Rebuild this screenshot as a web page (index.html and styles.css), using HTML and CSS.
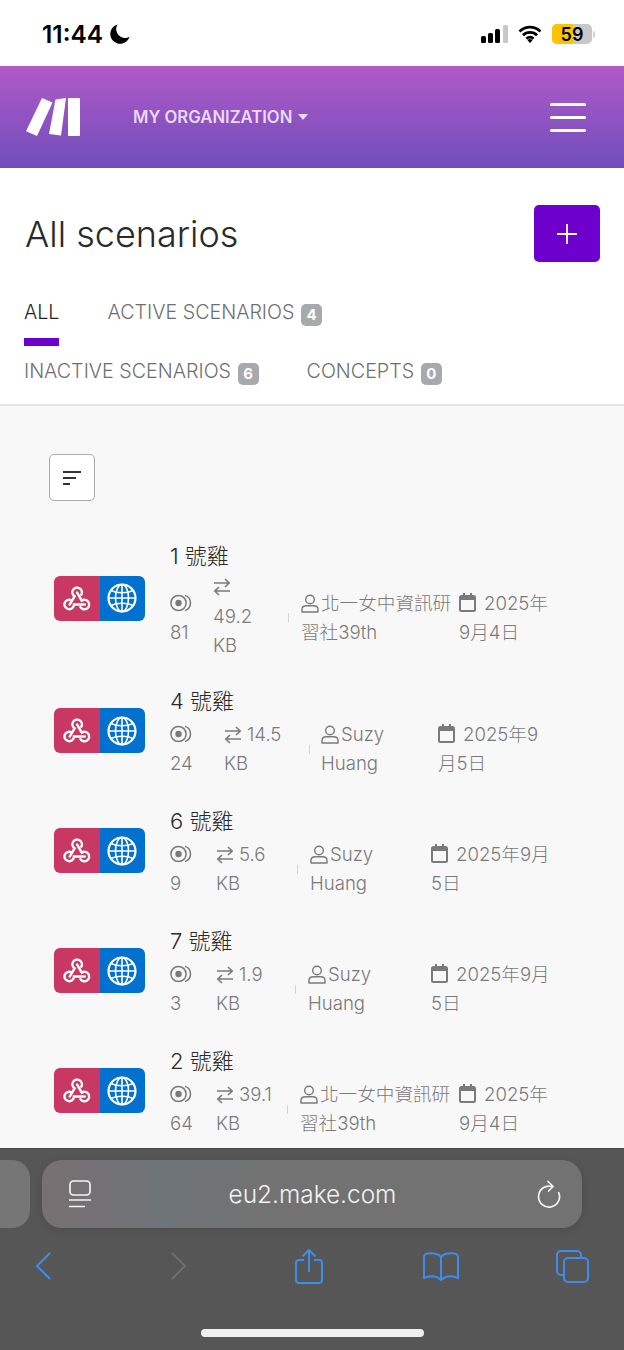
FILE: index.html
```html
<!DOCTYPE html>
<html lang="en">
<head>
    <meta charset="UTF-8">
    <title>All scenarios</title>
    <link rel="stylesheet" href="styles.css">
</head>
<body>

<svg class="defs" width="0" height="0">
    <symbol id="i-eye" viewBox="0 0 24 18">
        <circle cx="8.500" cy="9" r="7.600" fill="none" stroke="currentColor" stroke-width="1.500"/>
        <circle cx="8.500" cy="9" r="3.200" fill="currentColor"/>
        <path d="M15 1.400a8 8 0 0 1 0 15.200" fill="none" stroke="currentColor" stroke-width="1.500"/>
    </symbol>
    <symbol id="i-swap" viewBox="0 0 18 18">
        <path d="M1 5h15M12 1l4.200 4-4.200 4M17 13H2M6 9l-4.200 4 4.200 4" fill="none" stroke="currentColor" stroke-width="1.600"/>
    </symbol>
    <symbol id="i-user" viewBox="0 0 18 19">
        <circle cx="9" cy="5.500" r="4.300" fill="none" stroke="currentColor" stroke-width="1.400"/>
        <path d="M1 18v-2.500c0-2.500 2-3.700 4.500-3.700h7c2.500 0 4.500 1.200 4.500 3.700V18z" fill="none" stroke="currentColor" stroke-width="1.400" stroke-linejoin="round"/>
    </symbol>
    <symbol id="i-cal" viewBox="0 0 17 19">
        <path d="M4 0h2v3H4zM11 0h2v3h-2z" fill="currentColor"/>
        <path d="M2.500 2h12A2.500 2.500 0 0 1 17 4.500v12a2.500 2.500 0 0 1-2.500 2.500h-12A2.500 2.500 0 0 1 0 16.500v-12A2.500 2.500 0 0 1 2.500 2zM2 7v9.500a.5.500 0 0 0 .5.500h12a.5.500 0 0 0 .5-.5V7z" fill="currentColor" fill-rule="evenodd"/>
    </symbol>
    <symbol id="i-hook" viewBox="0 0 32 29">
        <g fill="none" stroke="#fff" stroke-width="2.800" stroke-linecap="round">
            <path d="M7.500 21.500L13.200 12A5.500 5.500 0 1 1 21 10"/>
            <path d="M16 7.500L21.500 17A5.500 5.500 0 1 1 20 24.500"/>
            <path d="M25 21.500H12.500A5.500 5.500 0 1 1 9.500 16.500"/>
        </g>
    </symbol>
    <symbol id="i-globe" viewBox="0 0 30 30">
        <g fill="none" stroke="#fff" stroke-width="1.600">
            <circle cx="15" cy="15" r="13.500" stroke-width="2.200"/>
            <ellipse cx="15" cy="15" rx="6.500" ry="13.500"/>
            <path d="M15 1.500v27M1.500 15h27"/>
            <path d="M4 7.500c6 3 16 3 22 0M4 22.500c6-3 16-3 22 0"/>
        </g>
    </symbol>
</svg>

<div class="status">
    <div class="clock">
        <span>11:44</span>
        <svg width="20" height="20" viewBox="0 0 20 20"><path d="M7.500 0.500a9.800 9.800 0 1 0 12 12.200A8.800 8.800 0 0 1 7.500 0.500z" fill="#000"/></svg>
    </div>
    <div class="status-right">
        <svg width="27" height="18" viewBox="0 0 27 18">
            <rect x="0" y="11" width="5" height="7" rx="1.500" fill="#000"/>
            <rect x="7" y="8" width="5" height="10" rx="1.500" fill="#000"/>
            <rect x="14" y="4" width="5" height="14" rx="1.500" fill="#000"/>
            <rect x="22" y="0" width="5" height="18" rx="1.500" fill="#c8c8c8"/>
        </svg>
        <svg width="24" height="18" viewBox="0 0 24 18">
            <path d="M1.500 6.500a15 15 0 0 1 21 0M5 10.200a10 10 0 0 1 14 0M8.500 13.700a5 5 0 0 1 7 0" fill="none" stroke="#000" stroke-width="2.800"/>
            <path d="M9.500 15.200L12 18l2.500-2.800a3.500 3.500 0 0 0-5 0z" fill="#000"/>
        </svg>
        <div class="battery"><span class="battery-fill"></span><span class="battery-num">59</span></div>
        <span class="battery-nub"></span>
    </div>
</div>

<header class="topbar">
    <svg class="logo" width="54" height="38" viewBox="0 0 54 38">
        <path d="M16 0l10.500 4.500L11 38 0 33.200z" fill="#fff"/>
        <path d="M29.500 1.500L40 0l-5 37.500-12-1.500z" fill="#fff"/>
        <rect x="42" y="0" width="12" height="38" rx="1" fill="#fff"/>
    </svg>
    <div class="org">MY ORGANIZATION <span class="caret"></span></div>
    <div class="burger"><span></span><span></span><span></span></div>
</header>

<section class="hero">
    <div class="hero-head">
        <h1>All scenarios</h1>
        <button class="add-btn">
            <svg width="22" height="22" viewBox="0 0 22 22"><path d="M11 1v20M1 11h20" stroke="#fff" stroke-width="1.800"/></svg>
        </button>
    </div>
    <nav class="tabs">
        <a class="tab tab-on">ALL</a>
        <a class="tab">ACTIVE SCENARIOS <span class="badge">4</span></a>
        <a class="tab">INACTIVE SCENARIOS <span class="badge">6</span></a>
        <a class="tab">CONCEPTS <span class="badge">0</span></a>
    </nav>
</section>

<main class="list">
    <button class="sort-btn">
        <svg width="20" height="16" viewBox="0 0 20 16"><path d="M1 2h18M1 8h13M1 14h7" stroke="#333" stroke-width="1.800"/></svg>
    </button>

    <div class="row">
        <div class="apps"><span class="app app-red"><svg width="28" height="25"><use href="#i-hook"/></svg></span><span class="app app-blue"><svg width="30" height="30"><use href="#i-globe"/></svg></span></div>
        <div class="info">
            <div class="name">1 號雞</div>
            <div class="meta meta-1">
                <div class="views"><svg class="ico-eye"><use href="#i-eye"/></svg>81</div>
                <div class="size size-stack"><svg class="ico-swap"><use href="#i-swap"/></svg>49.2 KB</div>
                <div class="sep"></div>
                <div class="owner"><svg class="ico-user"><use href="#i-user"/></svg>北一女中資訊研習社39th</div>
                <div class="date"><svg class="ico-cal"><use href="#i-cal"/></svg>2025年9月4日</div>
            </div>
        </div>
    </div>

    <div class="row">
        <div class="apps"><span class="app app-red"><svg width="28" height="25"><use href="#i-hook"/></svg></span><span class="app app-blue"><svg width="30" height="30"><use href="#i-globe"/></svg></span></div>
        <div class="info">
            <div class="name">4 號雞</div>
            <div class="meta meta-2">
                <div class="views"><svg class="ico-eye"><use href="#i-eye"/></svg>24</div>
                <div class="size"><svg class="ico-swap"><use href="#i-swap"/></svg>14.5 KB</div>
                <div class="sep"></div>
                <div class="owner"><svg class="ico-user"><use href="#i-user"/></svg>Suzy Huang</div>
                <div class="date"><svg class="ico-cal"><use href="#i-cal"/></svg>2025年9月5日</div>
            </div>
        </div>
    </div>

    <div class="row">
        <div class="apps"><span class="app app-red"><svg width="28" height="25"><use href="#i-hook"/></svg></span><span class="app app-blue"><svg width="30" height="30"><use href="#i-globe"/></svg></span></div>
        <div class="info">
            <div class="name">6 號雞</div>
            <div class="meta meta-3">
                <div class="views"><svg class="ico-eye"><use href="#i-eye"/></svg>9</div>
                <div class="size"><svg class="ico-swap"><use href="#i-swap"/></svg>5.6 KB</div>
                <div class="sep"></div>
                <div class="owner"><svg class="ico-user"><use href="#i-user"/></svg>Suzy Huang</div>
                <div class="date"><svg class="ico-cal"><use href="#i-cal"/></svg>2025年9月5日</div>
            </div>
        </div>
    </div>

    <div class="row">
        <div class="apps"><span class="app app-red"><svg width="28" height="25"><use href="#i-hook"/></svg></span><span class="app app-blue"><svg width="30" height="30"><use href="#i-globe"/></svg></span></div>
        <div class="info">
            <div class="name">7 號雞</div>
            <div class="meta meta-4">
                <div class="views"><svg class="ico-eye"><use href="#i-eye"/></svg>3</div>
                <div class="size"><svg class="ico-swap"><use href="#i-swap"/></svg>1.9 KB</div>
                <div class="sep"></div>
                <div class="owner"><svg class="ico-user"><use href="#i-user"/></svg>Suzy Huang</div>
                <div class="date"><svg class="ico-cal"><use href="#i-cal"/></svg>2025年9月5日</div>
            </div>
        </div>
    </div>

    <div class="row">
        <div class="apps"><span class="app app-red"><svg width="28" height="25"><use href="#i-hook"/></svg></span><span class="app app-blue"><svg width="30" height="30"><use href="#i-globe"/></svg></span></div>
        <div class="info">
            <div class="name">2 號雞</div>
            <div class="meta meta-5">
                <div class="views"><svg class="ico-eye"><use href="#i-eye"/></svg>64</div>
                <div class="size"><svg class="ico-swap"><use href="#i-swap"/></svg>39.1 KB</div>
                <div class="sep"></div>
                <div class="owner"><svg class="ico-user"><use href="#i-user"/></svg>北一女中資訊研習社39th</div>
                <div class="date"><svg class="ico-cal"><use href="#i-cal"/></svg>2025年9月4日</div>
            </div>
        </div>
    </div>
</main>

<footer class="safari">
    <div class="url-row">
        <div class="prev-tab"></div>
        <div class="url-bar">
            <svg width="24" height="28" viewBox="0 0 24 28" fill="none" stroke="#f4f4f4" stroke-width="1.700">
                <rect x="2" y="1" width="20" height="14" rx="3.500"/>
                <path d="M1 20h22M1 26.500h16"/>
            </svg>
            <span class="url-text">eu2.make.com</span>
            <svg width="24" height="28" viewBox="0 0 24 28" fill="none" stroke="#f4f4f4" stroke-width="1.700">
                <path d="M15 6.500A10.500 10.500 0 1 0 21.500 12"/>
                <path d="M10.500 1l5.500 5.500L11 11.500"/>
            </svg>
        </div>
    </div>
    <div class="tools">
        <svg class="tool-back" width="16" height="28" viewBox="0 0 16 28"><path d="M15 1L2 14l13 13" fill="none" stroke="#3e8ded" stroke-width="2"/></svg>
        <svg class="tool-fwd" width="16" height="28" viewBox="0 0 16 28"><path d="M1 1l13 13L1 27" fill="none" stroke="#6e6e6e" stroke-width="2"/></svg>
        <svg class="tool-share" width="28" height="35" viewBox="0 0 28 35" fill="none" stroke="#3e8ded" stroke-width="2">
            <path d="M9 11H4a3 3 0 0 0-3 3v17a3 3 0 0 0 3 3h20a3 3 0 0 0 3-3V14a3 3 0 0 0-3-3h-5"/>
            <path d="M14 23V1M7.500 7.500L14 1l6.500 6.500"/>
        </svg>
        <svg class="tool-book" width="36" height="29" viewBox="0 0 36 29" fill="none" stroke="#3e8ded" stroke-width="2">
            <path d="M18 5C15 1.500 10 1 5 1.500 2.500 1.800 1 3 1 5.500V26c5-2 12-2.500 17 2 5-4.500 12-4 17-2V5.500c0-2.500-1.500-3.700-4-4C26 1 21 1.500 18 5zM18 5v23"/>
        </svg>
        <svg class="tool-tabs" width="33" height="33" viewBox="0 0 33 33" fill="none" stroke="#3e8ded" stroke-width="2">
            <path d="M7 25H5a4 4 0 0 1-4-4V5a4 4 0 0 1 4-4h16a4 4 0 0 1 4 4v3"/>
            <rect x="8" y="8" width="24" height="24" rx="4"/>
        </svg>
    </div>
    <div class="home-bar"></div>
</footer>

</body>
</html>
```

FILE: styles.css
```css
* {
    box-sizing: border-box;
}

body {
    margin: 0;
    width: 624px;
    height: 1350px;
    display: flex;
    flex-direction: column;
    overflow: hidden;
    background: #fff;
    font-family: Inter, "Noto Sans CJK TC", sans-serif;
}

.defs {
    display: none;
}

/* status bar */
.status {
    height: 66px;
    flex: none;
    display: flex;
    justify-content: space-between;
    align-items: center;
    padding: 2px 29px 0 42px;
}

.clock {
    display: flex;
    align-items: center;
    gap: 7px;
    font-size: 24.400px;
    font-weight: 600;
    color: #000;
}

.status-right {
    display: flex;
    align-items: center;
    gap: 10px;
}

.battery {
    width: 40px;
    height: 20px;
    border-radius: 5px;
    background: #c8c8c8;
    overflow: hidden;
    display: flex;
    justify-content: center;
    align-items: center;
    position: relative;
    font-size: 18px;
    font-weight: 600;
    color: #000;
}

.battery-fill {
    position: absolute;
    left: 0;
    top: 0;
    bottom: 0;
    width: 21px;
    background: #fcc400;
}

.battery-num {
    position: relative;
}

.battery-nub {
    width: 2px;
    height: 7px;
    margin-left: -9px;
    border-radius: 0 2px 2px 0;
    background: #d0d0d0;
}

/* purple header */
.topbar {
    height: 102px;
    flex: none;
    display: flex;
    align-items: center;
    padding: 0 38px 0 26px;
    background: linear-gradient(#b15ac8, #6f4dbb);
}

.org {
    margin-left: 53px;
    font-size: 16.700px;
    font-weight: 600;
    color: #e9daf6;
    flex: 1;
    white-space: nowrap;
}

.caret {
    display: inline-block;
    width: 0;
    height: 0;
    margin-left: 1px;
    vertical-align: 3px;
    border-left: 5px solid transparent;
    border-right: 5px solid transparent;
    border-top: 6px solid #e9daf6;
}

.burger {
    width: 36px;
    display: flex;
    flex-direction: column;
    gap: 10px;
}

.burger span {
    height: 3px;
    border-radius: 2px;
    background: #fff;
}

/* title and tabs */
.hero {
    flex: none;
    padding: 37px 24px 0;
    border-bottom: 2px solid #e6e6e6;
    height: 238px;
}

.hero-head {
    display: flex;
    justify-content: space-between;
    align-items: center;
    height: 57px;
    margin-bottom: 26px;
}

h1 {
    margin: 0 0 0 1px;
    font-size: 36px;
    font-weight: 300;
    color: #2a2a2a;
}

.add-btn {
    width: 66px;
    height: 57px;
    border: none;
    border-radius: 5px;
    background: #6d00cc;
    display: flex;
    justify-content: center;
    align-items: center;
}

.tabs {
    display: flex;
    flex-wrap: wrap;
    column-gap: 48px;
    row-gap: 1px;
}

.tab {
    height: 58px;
    padding-top: 12px;
    line-height: 24px;
    font-size: 19.700px;
    font-weight: 300;
    color: #6f6f6f;
    border-bottom: 8px solid transparent;
    white-space: nowrap;
}

.tab-on {
    color: #222;
    border-bottom-color: #6d00cc;
}

.badge {
    display: inline-block;
    width: 21px;
    height: 22px;
    margin-left: 1px;
    line-height: 22px;
    text-align: center;
    vertical-align: -1px;
    border-radius: 5px;
    background: #a6a9ad;
    color: #fff;
    font-size: 15px;
    font-weight: 700;
}

/* list */
.list {
    flex: 1;
    min-height: 0;
    overflow: hidden;
    padding: 48px 0 0 54px;
    background: #f8f8f8;
}

.sort-btn {
    display: flex;
    justify-content: center;
    align-items: center;
    width: 46px;
    height: 47px;
    margin: 0 0 40px -5px;
    background: #fff;
    border: 1.500px solid #aaa;
    border-radius: 5px;
}

.row {
    display: flex;
    align-items: center;
    margin-bottom: 28px;
}

.apps {
    display: flex;
    flex: none;
    width: 91px;
    height: 45px;
    margin-right: 25px;
    margin-top: -3px;
    border-radius: 6px;
    overflow: hidden;
}

.app {
    flex: 1;
    display: flex;
    justify-content: center;
    align-items: center;
}

.app-red {
    background: #c93862;
}

.app-blue {
    background: #0071cf;
}

.name {
    height: 30px;
    line-height: 30px;
    margin-bottom: 4px;
    font-size: 22px;
    font-weight: 300;
    color: #2a2a2a;
}

.meta {
    display: grid;
    align-items: center;
    font-size: 18.600px;
    font-weight: 300;
    line-height: 29px;
    color: #7a7a7a;
}

.meta-1 {
    grid-template-columns: 43px 75px 13px 158px 96px;
    margin-bottom: -2px;
}

.meta-2 {
    grid-template-columns: 54px 85px 12px 117px 116px;
}

.meta-3 {
    grid-template-columns: 46px 81px 13px 121px 125px;
}

.meta-4 {
    grid-template-columns: 46px 79px 13px 123px 125px;
}

.meta-5 {
    grid-template-columns: 46px 71px 13px 159px 96px;
}

.size,
.owner {
    padding-right: 7px;
}

.sep {
    width: 1px;
    height: 9px;
    background: #d5d5d5;
}

.ico-eye {
    display: block;
    width: 24px;
    height: 18px;
    margin: 5px 0 6px;
    color: #7a7a7a;
}

.ico-swap {
    width: 18px;
    height: 18px;
    margin-right: 5px;
    vertical-align: -3px;
    color: #7a7a7a;
}

.size-stack .ico-swap {
    display: block;
    margin: 3px 0 6px;
}

.ico-user {
    width: 18px;
    height: 19px;
    margin-right: 2px;
    vertical-align: -3px;
    color: #7a7a7a;
}

.ico-cal {
    width: 17px;
    height: 19px;
    margin-right: 8px;
    vertical-align: -2px;
    color: #7a7a7a;
}

/* safari toolbar */
.safari {
    height: 202px;
    flex: none;
    background: #565656;
    border-top: 1px solid #4a4a4a;
    padding-top: 11px;
}

.url-row {
    display: flex;
    gap: 12px;
    height: 68px;
}

.prev-tab {
    width: 30px;
    border-radius: 0 18px 18px 0;
    background: #767676;
}

.url-bar {
    width: 540px;
    display: flex;
    justify-content: space-between;
    align-items: center;
    padding: 0 21px 0 26px;
    border-radius: 20px;
    background: linear-gradient(90deg, #777172 0, #757073 8%, #6e7478 22%, #727272 40%);
    box-shadow: 0 2px 10px rgba(0, 0, 0, 0.12);
}

.url-text {
    margin-right: 4px;
    font-size: 24.400px;
    font-weight: 300;
    color: #f2f2f2;
}

.tools {
    display: flex;
    align-items: center;
    height: 40px;
    margin-top: 18px;
    padding-left: 35px;
}

.tool-fwd {
    margin-left: 120px;
}

.tool-share {
    margin-left: 108px;
}

.tool-book {
    margin-left: 100px;
}

.tool-tabs {
    margin-left: 97px;
}

.home-bar {
    width: 223px;
    height: 8px;
    margin: 43px auto 0;
    border-radius: 4px;
    background: #f0f0f0;
}
```
